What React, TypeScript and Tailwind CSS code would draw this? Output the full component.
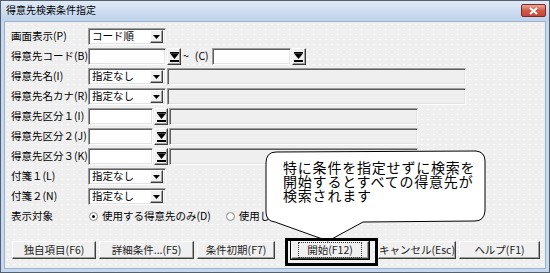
import React from "react";

const jp = "font-['Noto_Sans_CJK_JP',sans-serif]";

function Sunken({ className = "", children }: { className?: string; children?: React.ReactNode }) {
  return (
    <div
      className={`box-border border border-t-[#9c9c9c] border-l-[#9c9c9c] border-b-white border-r-white shadow-[inset_1px_1px_0_#5e5e5e,inset_-1px_-1px_0_#e3e3e3] ${className}`}
    >
      {children}
    </div>
  );
}

function Raised({ className = "", children }: { className?: string; children?: React.ReactNode }) {
  return (
    <div
      className={`box-border border border-t-white border-l-white border-b-[#3c3c3c] border-r-[#3c3c3c] shadow-[inset_-1px_-1px_0_#a0a0a0] bg-[#f0f0f0] flex items-center justify-center ${className}`}
    >
      {children}
    </div>
  );
}

function SmallArrow() {
  return (
    <svg width="7" height="4" viewBox="0 0 7 4">
      <polygon points="0,0 7,0 3.5,4" fill="#000" />
    </svg>
  );
}

function FilterIcon() {
  return (
    <svg width="9" height="10" viewBox="0 0 9 10">
      <rect x="0" y="0" width="9" height="1.5" fill="#000" />
      <polygon points="0,1.5 9,1.5 4.5,7" fill="#000" />
      <rect x="0" y="8" width="9" height="2" fill="#000" />
    </svg>
  );
}

function Combo({ text, w = "w-[78px]" }: { text: string; w?: string }) {
  return (
    <Sunken className={`${w} h-[17px] bg-white flex items-center pr-[2px]`}>
      <span className={`flex-1 pl-[3px] text-[10.5px] leading-none text-black ${jp}`}>{text}</span>
      <Raised className="w-[13px] h-[13px]">
        <SmallArrow />
      </Raised>
    </Sunken>
  );
}

function InputFilter({ w }: { w: string }) {
  return (
    <div className="flex items-center">
      <Sunken className={`${w} h-[17px] bg-white`} />
      <Raised className="w-[14px] h-[17px] ml-[1px]">
        <FilterIcon />
      </Raised>
    </div>
  );
}

function Disabled({ w }: { w: string }) {
  return <Sunken className={`${w} h-[17px] bg-[#efefef]`} />;
}

function Row({ label, children }: { label: string; children?: React.ReactNode }) {
  return (
    <div className="flex items-center h-[17px]">
      <div className={`w-[77px] text-[10.5px] leading-none text-black whitespace-nowrap ${jp}`}>{label}</div>
      {children}
    </div>
  );
}

function Radio({ checked }: { checked?: boolean }) {
  return (
    <div className="w-[9px] h-[9px] rounded-full border border-[#8a8a8a] bg-white flex items-center justify-center">
      {checked && <div className="w-[3px] h-[3px] rounded-full bg-black" />}
    </div>
  );
}

function Btn({ label, w, focus }: { label: string; w: string; focus?: boolean }) {
  return (
    <Raised className={`${w} h-[18px] ${focus ? "outline outline-black" : ""}`}>
      <span
        className={`text-[10.5px] leading-none text-[#222] whitespace-nowrap ${jp} ${
          focus ? "px-[8px] py-[2px] border border-dotted border-[#333]" : ""
        }`}
      >
        {label}
      </span>
    </Raised>
  );
}

export default function App() {
  return (
    <div className="relative w-[550px] h-[273px] overflow-hidden">
      <div className="w-[550px] h-[273px] box-border border border-[#55606e] bg-[#c6d8ef] flex flex-col">
        {/* title bar */}
        <div className="h-[20px] flex items-start justify-between pl-[5px] pr-[3px] bg-gradient-to-b from-[#e0eaf6] to-[#bdd2eb]">
          <span className={`mt-[4px] text-[10px] leading-none text-black ${jp}`}>得意先検索条件指定</span>
          <div className="mt-[3px] w-[25px] h-[13px] rounded-[2px] border border-[#7a2a22] bg-gradient-to-b from-[#e9a89b] via-[#d05a46] to-[#c8463a] flex items-center justify-center">
            <svg width="9" height="8" viewBox="0 0 9 8">
              <path d="M1 1 L8 7 M8 1 L1 7" stroke="#fff" strokeWidth="2" />
            </svg>
          </div>
        </div>
        {/* client */}
        <div className="flex-1 px-[3px] pb-[3px]">
          <div className="h-full box-border bg-[#efefef] bg-[radial-gradient(#fbfbfb_0.6px,transparent_0.8px)] bg-[length:6px_5px] border border-[#9db3cd] pt-[6px] pl-[6px] flex flex-col gap-[3px]">
            <Row label="画面表示(P)">
              <Combo text="コード順" />
            </Row>
            <Row label="得意先コード(B)">
              <InputFilter w="w-[78px]" />
              <span className={`ml-[2px] text-[10.5px] leading-none ${jp}`}>~</span>
              <span className={`ml-[6px] text-[10.5px] leading-none ${jp}`}>(C)</span>
              <div className="ml-[3px]">
                <InputFilter w="w-[79px]" />
              </div>
            </Row>
            <Row label="得意先名(I)">
              <Combo text="指定なし" />
              <div className="ml-[1px]">
                <Disabled w="w-[299px]" />
              </div>
            </Row>
            <Row label="得意先名カナ(R)">
              <Combo text="指定なし" />
              <div className="ml-[1px]">
                <Disabled w="w-[299px]" />
              </div>
            </Row>
            <Row label="得意先区分１(I)">
              <InputFilter w="w-[65px]" />
              <div className="ml-[1px]">
                <Disabled w="w-[249px]" />
              </div>
            </Row>
            <Row label="得意先区分２(J)">
              <InputFilter w="w-[65px]" />
              <div className="ml-[1px]">
                <Disabled w="w-[249px]" />
              </div>
            </Row>
            <Row label="得意先区分３(K)">
              <InputFilter w="w-[65px]" />
              <div className="ml-[1px]">
                <Disabled w="w-[249px]" />
              </div>
            </Row>
            <Row label="付箋１(L)">
              <Combo text="指定なし" />
            </Row>
            <Row label="付箋２(N)">
              <Combo text="指定なし" />
            </Row>
            <Row label="表示対象">
              <div className="ml-[1px] flex items-center">
                <Radio checked />
                <span className={`ml-[4px] text-[10.5px] leading-none ${jp}`}>使用する得意先のみ(D)</span>
                <div className="ml-[15px]">
                  <Radio />
                </div>
                <span className={`ml-[4px] text-[10.5px] leading-none ${jp}`}>使用しない得意先も含む(A)</span>
              </div>
            </Row>
            <div className="mt-[13px] flex items-start gap-[3px] pl-[1px]">
              <Btn label="独自項目(F6)" w="w-[84px]" />
              <Btn label="詳細条件...(F5)" w="w-[95px]" />
              <Btn label="条件初期(F7)" w="w-[78px]" />
              <div className="ml-[13px]">
                <Btn label="開始(F12)" w="w-[78px]" focus />
              </div>
              <div className="ml-[6px]">
                <Btn label="キャンセル(Esc)" w="w-[78px]" />
              </div>
              <Btn label="ヘルプ(F1)" w="w-[81px]" />
            </div>
          </div>
        </div>
      </div>

      {/* balloon */}
      <svg className="absolute left-0 top-0 pointer-events-none" width="550" height="273" viewBox="0 0 550 273">
        <path
          d="M276 152 L476 151 Q485 152 485 161 L485 211 Q484 221 475 221 L363 222 L328 241 L275 222 Q266 221 266 212 L266 163 Q266 152 276 152 Z"
          fill="#fff"
          stroke="#000"
          strokeWidth="1"
        />
      </svg>
      <p
        className={`absolute left-[283px] top-[160px] text-sm leading-[14px] tracking-[0.8px] text-black whitespace-nowrap ${jp}`}
      >
        特に条件を指定せずに検索を
        <br />
        開始するとすべての得意先が
        <br />
        検索されます
      </p>
      <div className="absolute left-[285px] top-[238px] w-[93px] h-[28px] border-[3px] border-black" />
    </div>
  );
}
